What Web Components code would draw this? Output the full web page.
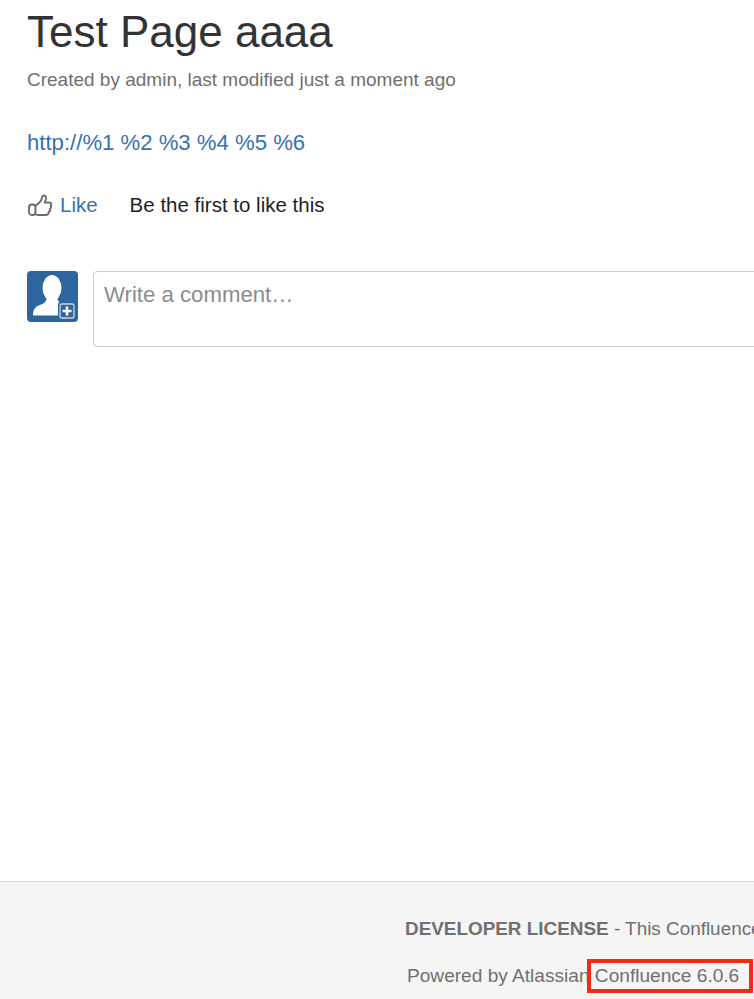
<!DOCTYPE html>
<html>
<head>
<meta charset="utf-8">
<title>Test Page aaaa</title>
<style>
  html, body { margin: 0; padding: 0; background: #fff; }
  body { font-family: "Liberation Sans", Arial, sans-serif; overflow: hidden; }
</style>
</head>
<body>
<wiki-page>
  <page-header slot="content" title="Test Page aaaa" byline="Created by admin, last modified just a moment ago"></page-header>
  <a slot="content" class="body-link" href="#" style="display:block;margin-top:31px;height:36px;font-size:22.15px;line-height:36px;color:#3572b0;text-decoration:none">http://%1 %2 %3 %4 %5 %6</a>
  <like-bar slot="content"></like-bar>
  <comment-box slot="content"></comment-box>
  <page-footer slot="footer"></page-footer>
</wiki-page>

<script>
class WikiPage extends HTMLElement {
  constructor() {
    super();
    this.attachShadow({ mode: "open" });
    this.shadowRoot.innerHTML = `
      <style>
        :host {
          display: flex;
          flex-direction: column;
          width: 754px;
          height: 999px;
          overflow: hidden;
        }
        .content { flex: 1; padding-left: 27px; }
      </style>
      <div class="content"><slot name="content"></slot></div>
      <slot name="footer"></slot>
    `;
  }
}

class PageHeader extends HTMLElement {
  constructor() {
    super();
    this.attachShadow({ mode: "open" });
  }

  connectedCallback() {
    this.shadowRoot.innerHTML = `
      <style>
        :host { display: block; }
        h1 {
          margin: 0;
          padding-top: 7px;
          font-size: 44px;
          line-height: 50px;
          font-weight: 400;
          color: #333;
        }
        p {
          margin: 0;
          padding-top: 9px;
          font-size: 19px;
          line-height: 28px;
          color: #707070;
        }
      </style>
      <h1>${this.getAttribute("title")}</h1>
      <p>${this.getAttribute("byline")}</p>
    `;
  }
}

class LikeBar extends HTMLElement {
  constructor() {
    super();
    this.attachShadow({ mode: "open" });
    this.shadowRoot.innerHTML = `
      <style>
        :host {
          display: flex;
          align-items: center;
          margin-top: 28px;
          height: 32px;
          font-size: 20.5px;
        }
        svg { width: 26px; height: 24px; margin-right: 7px; flex: none; }
        a { color: #3572b0; text-decoration: none; margin-right: 32px; }
        span { color: #222; }
      </style>
      <svg viewBox="0 0 26 24" fill="none" stroke="#6b6b6b" stroke-width="1.9" stroke-linejoin="round" stroke-linecap="round">
        <rect x="2" y="11.5" width="6.5" height="10.5" rx="2.8"/>
        <path d="M8.5 12.5 C11.5 11 14 8.5 15 5 C15.5 3 16.5 2 17.8 2.6 C19.5 3.4 19.1 6.5 17.7 9.5 L22.5 9.5 C24.6 9.5 24.8 11.8 23.6 12.8 C24.4 14 24 15.6 22.8 16.2 C23.2 17.6 22.6 18.8 21.6 19.2 C21.8 20.8 20.8 22 19.3 22 L11 22 C9.9 22 9.1 21.7 8.5 21"/>
      </svg>
      <a href="#">Like</a>
      <span>Be the first to like this</span>
    `;
  }
}

class CommentBox extends HTMLElement {
  constructor() {
    super();
    this.attachShadow({ mode: "open" });
    this.shadowRoot.innerHTML = `
      <style>
        :host {
          display: flex;
          align-items: flex-start;
          gap: 15px;
          margin-top: 50px;
          width: 800px;
        }
        svg { width: 51px; height: 51px; flex: none; display: block; }
        .input {
          flex: 1;
          box-sizing: border-box;
          height: 76px;
          border: 1px solid #ccc;
          border-radius: 4px;
          padding: 9px 10px;
          font-size: 22.2px;
          line-height: 28px;
          color: #8c8c8c;
        }
      </style>
      <svg viewBox="0 0 51 51">
        <rect width="51" height="51" rx="4" fill="#2d659c"/>
        <ellipse cx="25" cy="17" rx="9.5" ry="13" fill="#fff"/>
        <path d="M6 44.5 C6 38 8.5 35.5 13 34 C16.5 33 19 31 20 27 L30 27 C31 31 33.5 32.5 37 33.5 L37 44.5 Z" fill="#fff"/>
        <rect x="31" y="31" width="17" height="17" rx="2.5" fill="#2d659c"/>
        <rect x="33" y="33" width="14" height="14" rx="2" fill="#2d659c" stroke="#c9d6e4" stroke-width="1.3"/>
        <path d="M40 35.5 V44.5 M35.5 40 H44.5" stroke="#fff" stroke-width="2.6"/>
      </svg>
      <div class="input">Write a comment…</div>
    `;
  }
}

class PageFooter extends HTMLElement {
  constructor() {
    super();
    this.attachShadow({ mode: "open" });
    this.shadowRoot.innerHTML = `
      <style>
        :host {
          display: block;
          position: relative;
          box-sizing: border-box;
          height: 118px;
          padding: 33px 0 0 405px;
          background: #f5f5f5;
          border-top: 1px solid #d9d9d9;
          font-size: 18.9px;
          line-height: 27px;
          color: #707070;
          white-space: nowrap;
          overflow: hidden;
        }
        .powered { margin-top: 20px; padding-left: 2px; font-size: 19.1px; }
        .mark {
          position: absolute;
          left: 587px;
          top: 77px;
          width: 166px;
          height: 34px;
          box-sizing: border-box;
          border: 4px solid #f52a0f;
        }
      </style>
      <div><b>DEVELOPER LICENSE</b> - This Confluence</div>
      <div class="powered">Powered by Atlassian Confluence 6.0.6</div>
      <div class="mark"></div>
    `;
  }
}

customElements.define("wiki-page", WikiPage);
customElements.define("page-header", PageHeader);
customElements.define("like-bar", LikeBar);
customElements.define("comment-box", CommentBox);
customElements.define("page-footer", PageFooter);
</script>
</body>
</html>
